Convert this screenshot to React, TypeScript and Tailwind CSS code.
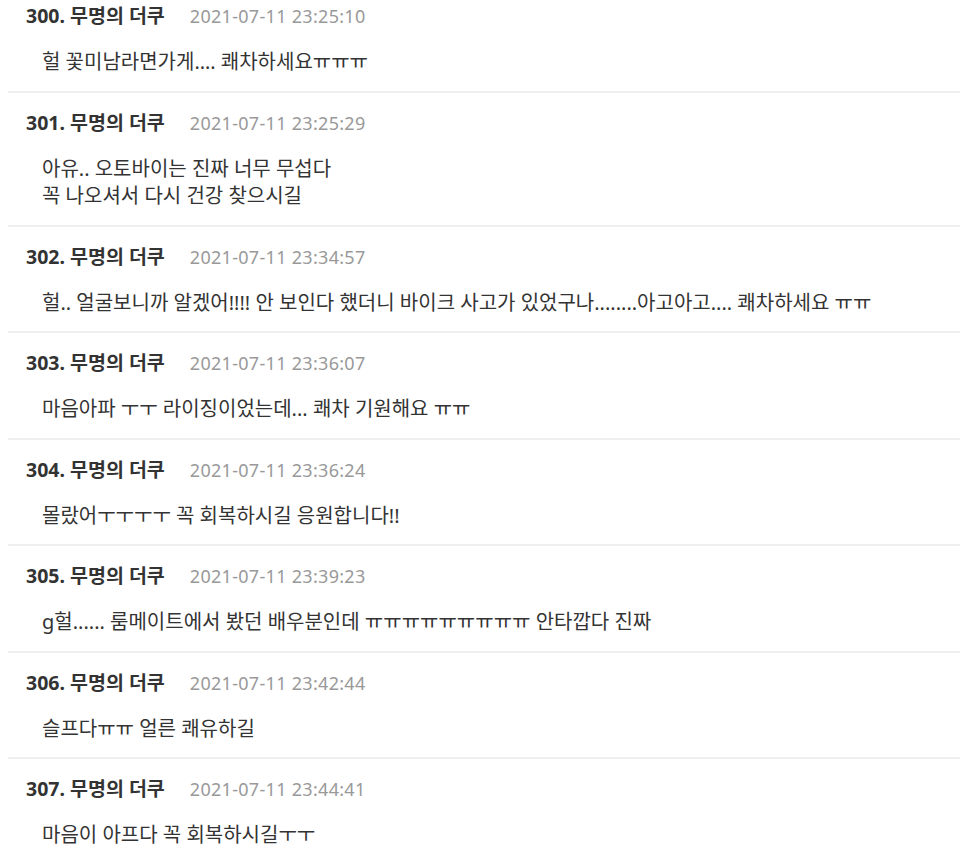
import React from 'react';

type Comment = {
  no: number;
  time: string;
  lines: string[];
};

const comments: Comment[] = [
  { no: 300, time: '2021-07-11 23:25:10', lines: ['헐 꽃미남라면가게…. 쾌차하세요ㅠㅠㅠ'] },
  { no: 301, time: '2021-07-11 23:25:29', lines: ['아유.. 오토바이는 진짜 너무 무섭다', '꼭 나오셔서 다시 건강 찾으시길'] },
  {
    no: 302,
    time: '2021-07-11 23:34:57',
    lines: ['헐.. 얼굴보니까 알겠어!!!! 안 보인다 했더니 바이크 사고가 있었구나........아고아고.... 쾌차하세요 ㅠㅠ'],
  },
  { no: 303, time: '2021-07-11 23:36:07', lines: ['마음아파 ㅜㅜ 라이징이었는데... 쾌차 기원해요 ㅠㅠ'] },
  { no: 304, time: '2021-07-11 23:36:24', lines: ['몰랐어ㅜㅜㅜㅜ 꼭 회복하시길 응원합니다!!'] },
  { no: 305, time: '2021-07-11 23:39:23', lines: ['g헐...... 룸메이트에서 봤던 배우분인데 ㅠㅠㅠㅠㅠㅠㅠㅠㅠ 안타깝다 진짜'] },
  { no: 306, time: '2021-07-11 23:42:44', lines: ['슬프다ㅠㅠ 얼른 쾌유하길'] },
  { no: 307, time: '2021-07-11 23:44:41', lines: ['마음이 아프다 꼭 회복하시길ㅜㅜ'] },
];

function CommentItem({ c }: { c: Comment }) {
  return (
    <li className="ml-2 border-b-2 border-[#efefef] pt-[16px] pb-[15px]">
      <div className="flex items-center pl-[18px] leading-[28px]">
        <span className="text-[19.5px] font-bold text-[#333333]">
          {c.no}. 무명의 더쿠
        </span>
        <span className="ml-[25px] text-[18px] tracking-[0.3px] text-[#999999]">{c.time}</span>
      </div>
      <div className="mt-[18px] pl-[34px] text-[20px] leading-[27.5px] text-[#333333]">
        {c.lines.map((line, i) => (
          <p key={i}>{line}</p>
        ))}
      </div>
    </li>
  );
}

export default function App() {
  return (
    <div
      className="h-[858px] w-[960px] overflow-hidden bg-white"
      style={{ fontFamily: '"Noto Sans", "Noto Sans CJK KR", sans-serif' }}
    >
      <ul className="-mt-[14px]">
        {comments.map((c) => (
          <CommentItem key={c.no} c={c} />
        ))}
      </ul>
    </div>
  );
}
